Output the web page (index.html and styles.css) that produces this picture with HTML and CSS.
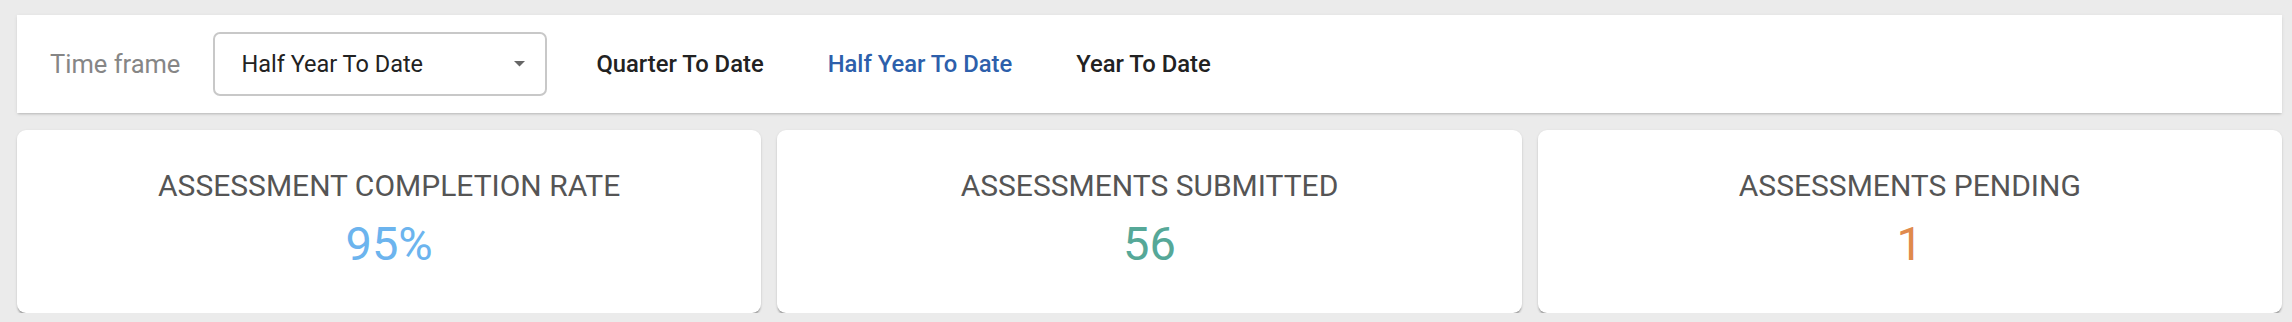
FILE: index.html
```html
<!DOCTYPE html>
<html>
  <head>
    <meta charset="UTF-8" />
    <title>Assessments Dashboard</title>
    <link rel="stylesheet" href="styles.css">
  </head>

  <body>
    <div class="filter-bar">
      <span class="filter-label">Time frame</span>
      <div class="select-box">
        <span>Half Year To Date</span>
        <svg class="select-arrow" viewBox="7 10 10 5" width="11" height="5.5">
          <path d="M7 10l5 5 5-5z" fill="currentColor" />
        </svg>
      </div>
      <div class="quick-links">
        <button class="quick-link">Quarter To Date</button>
        <button class="quick-link active">Half Year To Date</button>
        <button class="quick-link">Year To Date</button>
      </div>
    </div>

    <div class="stat-row">
      <div class="stat-card">
        <div class="stat-title">ASSESSMENT COMPLETION RATE</div>
        <div class="stat-value blue">95%</div>
      </div>
      <div class="stat-card">
        <div class="stat-title">ASSESSMENTS SUBMITTED</div>
        <div class="stat-value green">56</div>
      </div>
      <div class="stat-card">
        <div class="stat-title">ASSESSMENTS PENDING</div>
        <div class="stat-value orange">1</div>
      </div>
    </div>
  </body>
</html>
```

FILE: styles.css
```css
body {
  margin: 0;
  padding: 15px 10px 0 17px;
  background-color: #ebebeb;
  font-family: Roboto, "Liberation Sans", sans-serif;
}

.filter-bar {
  display: flex;
  align-items: center;
  height: 98px;
  padding-left: 33px;
  background-color: #fff;
  box-shadow: 0 2px 2px -1px rgba(0, 0, 0, 0.16), 0 1px 4px rgba(0, 0, 0, 0.08);
}

.filter-label {
  font-size: 25.5px;
  color: #868686;
  margin-right: 33px;
}

.select-box {
  display: flex;
  align-items: center;
  justify-content: space-between;
  box-sizing: border-box;
  width: 334px;
  height: 64px;
  padding: 0 20px 0 26px;
  border: 2px solid #c8c8c8;
  border-radius: 7px;
  font-size: 23.5px;
  color: #222;
}

.select-arrow {
  color: #666;
}

.quick-links {
  display: flex;
  margin-left: 17px;
}

.quick-link {
  background: none;
  border: none;
  padding: 0 32px;
  font-family: inherit;
  font-size: 23.8px;
  font-weight: 500;
  color: #222;
  cursor: pointer;
}

.quick-link.active {
  color: #2d5fab;
}

.stat-row {
  display: grid;
  grid-template-columns: 1fr 1fr 1fr;
  gap: 16px;
  margin-top: 17px;
}

.stat-card {
  height: 183px;
  box-sizing: border-box;
  padding-top: 38px;
  background-color: #fff;
  border-radius: 9px;
  text-align: center;
  box-shadow: 0 3px 2px -1px rgba(0, 0, 0, 0.3), 0 1px 3px rgba(0, 0, 0, 0.12);
}

.stat-title {
  font-size: 30px;
  color: #555;
}

.stat-value {
  margin-top: 13px;
  font-size: 47px;
}

.blue {
  color: #6cb4ee;
}

.green {
  color: #56a898;
}

.orange {
  color: #e08a4c;
}
```
